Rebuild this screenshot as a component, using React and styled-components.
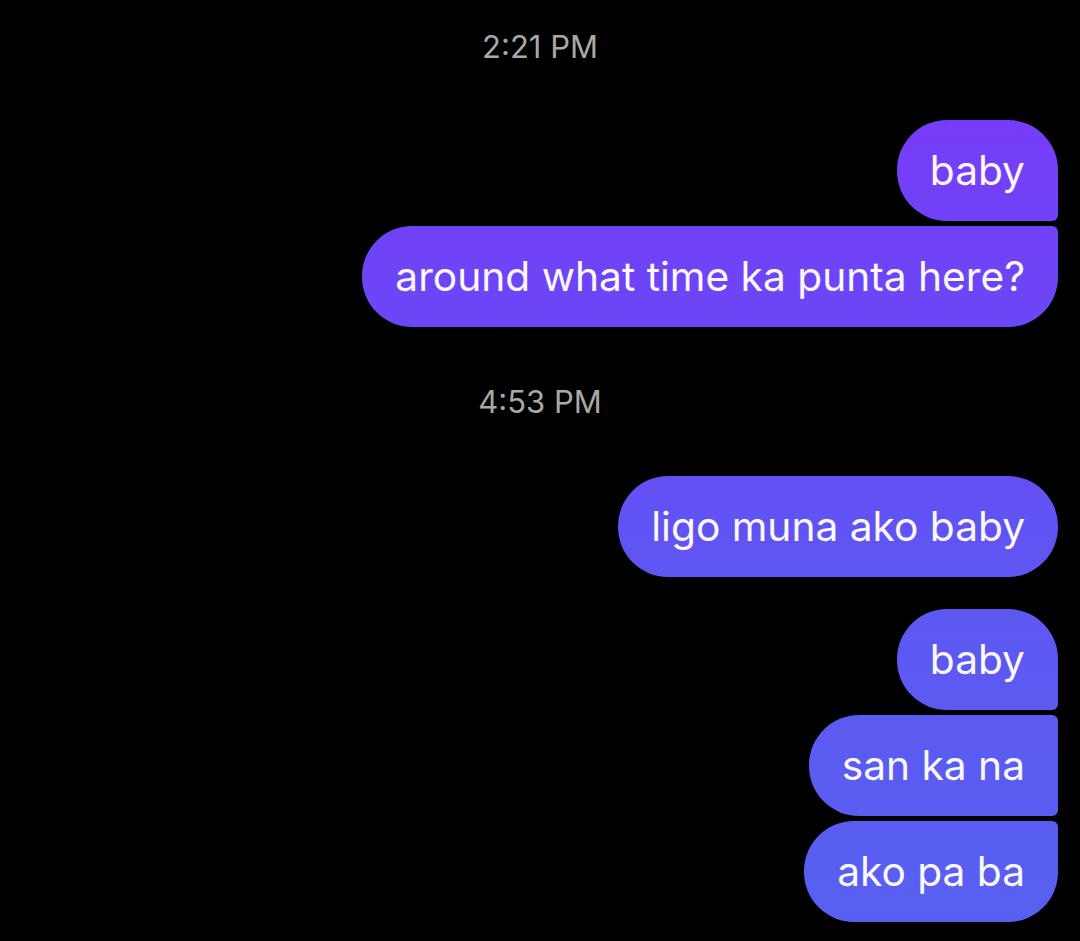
import React from "react";
import styled, { createGlobalStyle } from "styled-components";

const GlobalStyle = createGlobalStyle`
   html, body {
      margin: 0;
      padding: 0;
      background: #000;
   }
   body {
      font-family: Inter, "Noto Sans", "Liberation Sans", sans-serif;
      -webkit-font-smoothing: antialiased;
   }
`;

const Thread = styled.div`
   width: 1080px;
   min-height: 941px;
   box-sizing: border-box;
   padding: 0 22px 0 22px;
   display: flex;
   flex-direction: column;
   background: #000;
`;

const Stamp = styled.div`
   margin-top: ${(props) => props.$top}px;
   text-align: center;
   font-size: 31px;
   line-height: 34px;
   color: #a8a8a8;
`;

const Group = styled.div`
   margin-top: ${(props) => props.$top}px;
   display: flex;
   flex-direction: column;
   align-items: flex-end;
   gap: 5px;
`;

const radius = {
   single: "50px",
   first: "50px 50px 6px 50px",
   middle: "50px 6px 6px 50px",
   last: "50px 6px 50px 50px",
};

// sent bubbles share one gradient pinned to the viewport
const Bubble = styled.div`
   height: 101px;
   box-sizing: border-box;
   padding: 0 33px;
   display: flex;
   align-items: center;
   border-radius: ${(props) => radius[props.$pos]};
   background: linear-gradient(180deg, #7f36fa 0%, #6a47f6 35%, #5d58f2 65%, #5760f1 100%);
   background-attachment: fixed;
   color: #fbf8ff;
   font-size: 40.7px;
   white-space: nowrap;
`;

const position = (i, n) => {
   if (n === 1) return "single";
   if (i === 0) return "first";
   if (i === n - 1) return "last";
   return "middle";
};

const MessageGroup = ({ top, messages }) => (
   <Group $top={top}>
      {messages.map((text, i) => (
         <Bubble key={i} $pos={position(i, messages.length)}>
            {text}
         </Bubble>
      ))}
   </Group>
);

const App = () => {
   return (
      <>
         <GlobalStyle />
         <Thread>
            <Stamp $top={30}>2:21 PM</Stamp>
            <MessageGroup top={56} messages={["baby", "around what time ka punta here?"]} />
            <Stamp $top={58}>4:53 PM</Stamp>
            <MessageGroup top={57} messages={["ligo muna ako baby"]} />
            <MessageGroup top={32} messages={["baby", "san ka na", "ako pa ba"]} />
         </Thread>
      </>
   );
};

export default App;
